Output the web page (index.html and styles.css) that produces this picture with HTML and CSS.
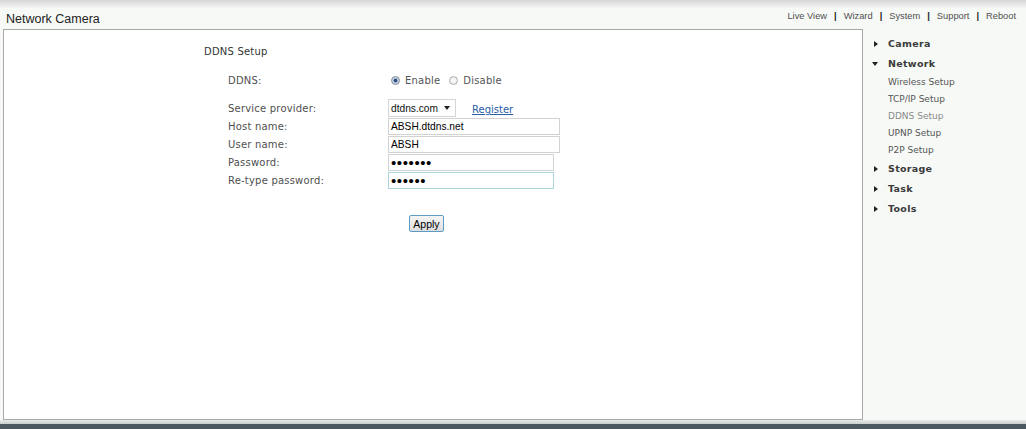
FILE: index.html
```html
<!DOCTYPE html>
<html lang="en">
<head>
  <meta charset="UTF-8" />
  <title>Network Camera</title>
  <link rel="stylesheet" href="styles.css">
</head>
<body>

  <div class="topbar"></div>

  <header class="header">
    <div class="title">Network Camera</div>
    <nav class="nav"><a href="#">Live View</a><span class="sep">|</span><a href="#">Wizard</a><span class="sep">|</span><a href="#">System</a><span class="sep">|</span><a href="#">Support</a><span class="sep">|</span><a href="#">Reboot</a></nav>
  </header>

  <div class="main">
    <!-- Panneau principal -->
    <section class="panel">
      <h2 class="panel-title">DDNS Setup</h2>

      <form class="ddns-form">
        <div class="row row-ddns">
          <label class="lbl">DDNS:</label>
          <div class="field">
            <label class="radio"><input type="radio" name="ddns" checked> Enable</label>
            <label class="radio"><input type="radio" name="ddns"> Disable</label>
          </div>
        </div>

        <div class="row row-first">
          <label class="lbl">Service provider:</label>
          <div class="field">
            <span class="select">
              <select>
                <option>dtdns.com</option>
              </select>
            </span>
            <a href="#" class="register">Register</a>
          </div>
        </div>

        <div class="row">
          <label class="lbl">Host name:</label>
          <div class="field"><input type="text" class="txt wide" value="ABSH.dtdns.net"></div>
        </div>

        <div class="row">
          <label class="lbl">User name:</label>
          <div class="field"><input type="text" class="txt wide" value="ABSH"></div>
        </div>

        <div class="row">
          <label class="lbl">Password:</label>
          <div class="field"><input type="password" class="txt pwd" value="1234567"></div>
        </div>

        <div class="row">
          <label class="lbl">Re-type password:</label>
          <div class="field"><input type="password" class="txt pwd focus" value="123456"></div>
        </div>

        <div class="actions">
          <button type="button" class="btn">Apply</button>
        </div>
      </form>
    </section>

    <!-- Menu de droite -->
    <aside class="sidebar">
      <ul class="menu">
        <li class="menu-item closed">Camera</li>
        <li class="menu-item open">Network</li>
        <li class="sub">Wireless Setup</li>
        <li class="sub">TCP/IP Setup</li>
        <li class="sub current">DDNS Setup</li>
        <li class="sub">UPNP Setup</li>
        <li class="sub">P2P Setup</li>
        <li class="menu-item closed">Storage</li>
        <li class="menu-item closed">Task</li>
        <li class="menu-item closed">Tools</li>
      </ul>
    </aside>
  </div>

  <div class="bottom"></div>
  <div class="taskbar"></div>

</body>
</html>
```

FILE: styles.css
```css
/* Base */
* {
  margin: 0;
  padding: 0;
  box-sizing: border-box;
}
html, body {
  width: 100%;
  height: 100%;
  overflow: hidden;
}
body {
  background: #f7f9f7;
  color: #444;
  font-family: 'DejaVu Sans', Verdana, sans-serif;
  font-size: 10px;
}
a {
  color: inherit;
  text-decoration: none;
}

/* Bande du haut */
.topbar {
  height: 8px;
  background: linear-gradient(#d6d6d6, #f4f6f4);
}
.header {
  height: 21px;
  display: flex;
  justify-content: space-between;
  align-items: flex-start;
}
.title {
  padding: 4px 0 0 6px;
  font-family: 'Liberation Sans', Arial, sans-serif;
  font-size: 12.5px;
  color: #222;
}
.nav {
  padding: 3px 10px 0 0;
  font-family: 'Liberation Sans', Arial, sans-serif;
  font-size: 9.3px;
  color: #505050;
}
.nav .sep {
  font-weight: bold;
  color: #222;
  margin: 0 7px;
}

/* Zone principale */
.main {
  display: flex;
  height: 391px;
}
.panel {
  width: 860px;
  margin-left: 3px;
  background: #fff;
  border: 1px solid #a8a8a8;
  padding: 15px 0 0 200px;
}
.panel-title {
  font-size: 10px;
  font-weight: normal;
  line-height: 14px;
  color: #333;
  letter-spacing: 0.2px;
}

/* Formulaire */
.ddns-form {
  padding-left: 24px;
  margin-top: 12px;
}
.row {
  display: flex;
  align-items: center;
  height: 18px;
}
.row-ddns {
  margin-bottom: 10px;
}
.lbl {
  width: 160px;
  color: #4f4f4f;
  letter-spacing: 0.2px;
}
.field {
  display: flex;
  align-items: center;
}
.radio {
  display: flex;
  align-items: center;
  gap: 5px;
  margin: 0 6px 0 3px;
  color: #555;
  letter-spacing: 0.2px;
}
.radio input {
  appearance: none;
  width: 9px;
  height: 9px;
  border: 1px solid #b0b0b0;
  border-radius: 50%;
  background: radial-gradient(circle, #fff 0, #e4e4e4 100%);
}
.radio input:checked {
  border-color: #7f8a99;
  background: radial-gradient(circle, #2d4f80 0, #2d4f80 1.6px, #b9c9dc 2.2px, #e6ecf3 100%);
}

.select {
  position: relative;
  display: inline-block;
}
.select select {
  appearance: none;
  width: 68px;
  height: 18px;
  border: 1px solid #d6d6d6;
  background: #fff;
  font-family: 'Liberation Sans', Arial, sans-serif;
  font-size: 10.2px;
  color: #111;
  padding: 0 14px 0 2px;
}
.select::after {
  content: '';
  position: absolute;
  right: 6px;
  top: 7px;
  border-left: 3px solid transparent;
  border-right: 3px solid transparent;
  border-top: 4px solid #222;
}
.register {
  margin-left: 16px;
  margin-top: 3px;
  color: #2a5ea8;
  text-decoration: underline;
}

.txt {
  height: 17px;
  border: 1px solid #d2d2d2;
  background: #fff;
  font-family: 'Liberation Sans', Arial, sans-serif;
  font-size: 10.2px;
  color: #000;
  padding: 0 2px;
  outline: none;
}
.txt.wide {
  width: 172px;
}
.txt.pwd {
  width: 166px;
  font-size: 15px;
  letter-spacing: 0.6px;
}
.txt.focus {
  border-color: #acd3dd;
}

.actions {
  margin: 26px 0 0 181px;
}
.btn {
  width: 35px;
  height: 17px;
  border: 1px solid #5e9cc4;
  border-radius: 2px;
  background: linear-gradient(#f6f6f6, #dedede);
  font-family: 'Liberation Sans', Arial, sans-serif;
  font-size: 10.5px;
  color: #000;
}

/* Menu de droite */
.sidebar {
  flex: 1;
  padding-top: 5px;
}
.menu {
  list-style: none;
}
.menu-item {
  position: relative;
  height: 20px;
  line-height: 20px;
  padding-left: 25px;
  font-weight: bold;
  font-size: 9.5px;
  color: #3a3a3a;
  letter-spacing: 0.3px;
}
.menu-item::before {
  content: '';
  position: absolute;
  top: 7px;
}
.menu-item.closed::before {
  left: 11px;
  border-top: 3px solid transparent;
  border-bottom: 3px solid transparent;
  border-left: 4px solid #222;
}
.menu-item.open::before {
  left: 9px;
  top: 8px;
  border-left: 3px solid transparent;
  border-right: 3px solid transparent;
  border-top: 4px solid #222;
}
.sub {
  height: 17px;
  line-height: 17px;
  padding-left: 25px;
  font-size: 9px;
  color: #555;
}
.sub.current {
  color: #8a8a8a;
}

/* Bas de page */
.bottom {
  height: 4px;
  background: linear-gradient(#e8ebe8, #c9cfcf);
}
.taskbar {
  height: 10px;
  background: #4b5960;
}
```
